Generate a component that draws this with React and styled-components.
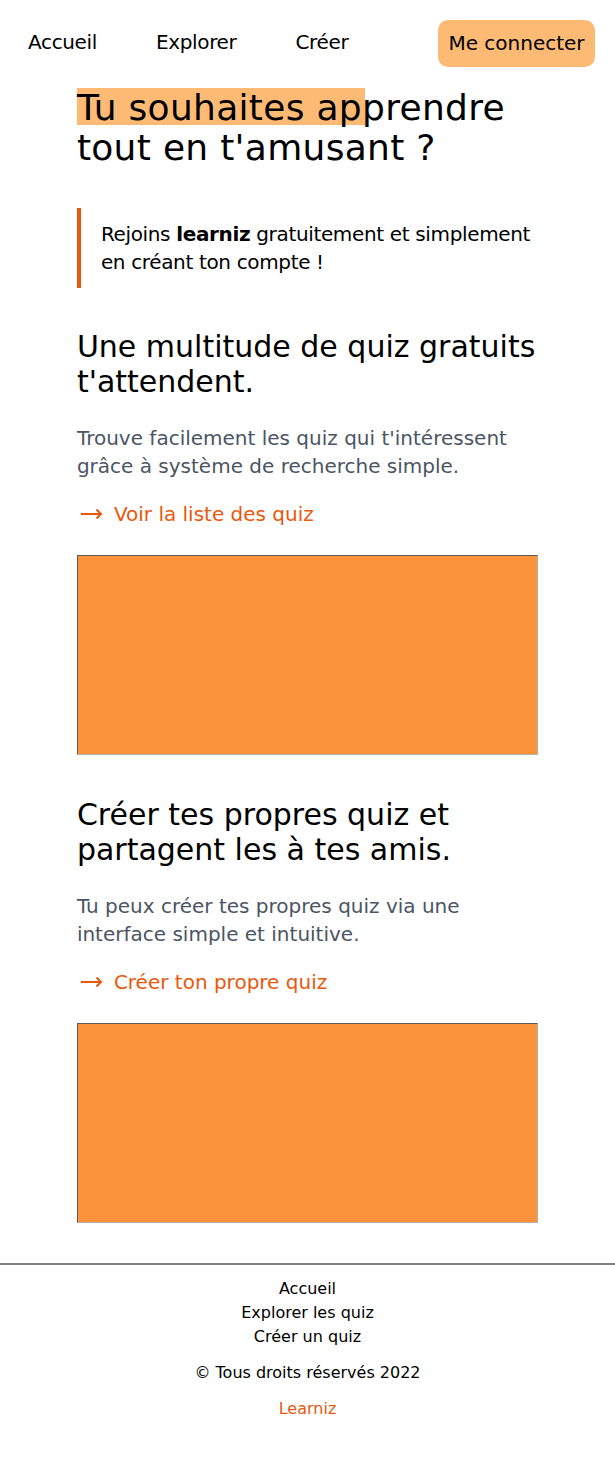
import React from "react";
import styled, { createGlobalStyle } from "styled-components";

const GlobalStyle = createGlobalStyle`
  * { box-sizing: border-box; }
  body {
    margin: 0;
    background: #ffffff;
    color: #000000;
    font-family: "DejaVu Sans", "Noto Sans", sans-serif;
  }
  p, h1, h2, blockquote { margin: 0; }
`;

const Nav = styled.nav`
  display: flex;
  align-items: center;
  justify-content: space-between;
  padding: 20px 20px 0 28px;
`;

const NavLinks = styled.div`
  display: flex;
  align-items: center;
  gap: 59px;
  margin-bottom: 3px;
`;

const NavLink = styled.a`
  font-size: 20px;
  line-height: 28px;
  color: #000;
  text-decoration: none;
  letter-spacing: -0.35px;
`;

const LoginButton = styled.button`
  font-family: inherit;
  font-size: 20px;
  line-height: 28px;
  color: #000;
  background: #fdba74;
  border: none;
  border-radius: 10px;
  padding: 9px 10px 10px;
  width: 157px;
  text-align: center;
`;

const Main = styled.main`
  width: 75%;
  margin: 0 auto;
  display: flex;
  flex-direction: column;
`;

const Hero = styled.h1`
  position: relative;
  margin-top: 21px;
  font-size: 36px;
  line-height: 40px;
  font-weight: 400;
  letter-spacing: 0.3px;
  z-index: 0;

  &::before {
    content: "";
    position: absolute;
    left: 0;
    top: 0;
    width: 62.5%;
    height: 37px;
    background: #fdba74;
    z-index: -1;
  }
`;

const Quote = styled.blockquote`
  margin-top: 40px;
  border-left: 4px solid #ea580c;
  padding: 12px 0 12px 20px;
  font-size: 20px;
  line-height: 28px;
  letter-spacing: -0.35px;
`;

const Strong = styled.strong`
  font-weight: 700;
`;

const Section = styled.section`
  margin-top: ${(p) => (p.$first ? "41px" : "42px")};
  display: flex;
  flex-direction: column;
`;

const SectionTitle = styled.h2`
  font-size: 30px;
  line-height: 35px;
  font-weight: 400;
`;

const SectionText = styled.p`
  margin-top: 25px;
  font-size: 20px;
  line-height: 28px;
  color: #4b5563;
`;

const CtaLink = styled.a`
  margin-top: 20px;
  display: flex;
  align-items: center;
  gap: 11px;
  font-size: 20px;
  line-height: 28px;
  color: #ea580c;
  text-decoration: none;
  padding-left: 4px;
`;

const Picture = styled.div`
  margin-top: 27px;
  height: 200px;
  background: #fb923c;
  border-style: solid;
  border-width: 1px;
  border-color: #5f5a55 #b5b0aa #b5b0aa #5f5a55;
`;

const Footer = styled.footer`
  margin-top: 40px;
  border-top: 2px solid #808080;
  padding: 12px 0 41px;
  display: flex;
  flex-direction: column;
  align-items: center;
  font-size: 16px;
  line-height: 24px;
`;

const FooterLinks = styled.div`
  display: flex;
  flex-direction: column;
  align-items: center;
`;

const FooterLink = styled.a`
  color: #000;
  text-decoration: none;
`;

const Copyright = styled.p`
  margin-top: 12px;
`;

const Brand = styled.p`
  margin-top: 12px;
  color: #ea580c;
`;

const Arrow = () => (
  <svg width="22" height="12" viewBox="0 0 22 12" fill="none" stroke="currentColor" strokeWidth="2" strokeLinecap="butt" strokeLinejoin="miter">
    <path d="M0 6h20" />
    <path d="M15.5 1.5L20 6l-4.5 4.5" />
  </svg>
);

const sections = [
  {
    title: ["Une multitude de quiz gratuits", "t'attendent."],
    text: "Trouve facilement les quiz qui t'intéressent grâce à système de recherche simple.",
    link: "Voir la liste des quiz",
  },
  {
    title: ["Créer tes propres quiz et", "partagent les à tes amis."],
    text: "Tu peux créer tes propres quiz via une interface simple et intuitive.",
    link: "Créer ton propre quiz",
  },
];

export default function App() {
  return (
    <>
      <GlobalStyle />
      <Nav>
        <NavLinks>
          <NavLink href="#">Accueil</NavLink>
          <NavLink href="#">Explorer</NavLink>
          <NavLink href="#">Créer</NavLink>
        </NavLinks>
        <LoginButton>Me connecter</LoginButton>
      </Nav>
      <Main>
        <Hero>
          Tu souhaites apprendre
          <br />
          tout en t'amusant ?
        </Hero>
        <Quote>
          Rejoins <Strong>learniz</Strong> gratuitement et simplement en créant ton compte !
        </Quote>
        {sections.map((s, i) => (
          <Section key={s.link} $first={i === 0}>
            <SectionTitle>
              {s.title[0]}
              <br />
              {s.title[1]}
            </SectionTitle>
            <SectionText>{s.text}</SectionText>
            <CtaLink href="#">
              <Arrow />
              {s.link}
            </CtaLink>
            <Picture />
          </Section>
        ))}
      </Main>
      <Footer>
        <FooterLinks>
          <FooterLink href="#">Accueil</FooterLink>
          <FooterLink href="#">Explorer les quiz</FooterLink>
          <FooterLink href="#">Créer un quiz</FooterLink>
        </FooterLinks>
        <Copyright>© Tous droits réservés 2022</Copyright>
        <Brand>Learniz</Brand>
      </Footer>
    </>
  );
}
